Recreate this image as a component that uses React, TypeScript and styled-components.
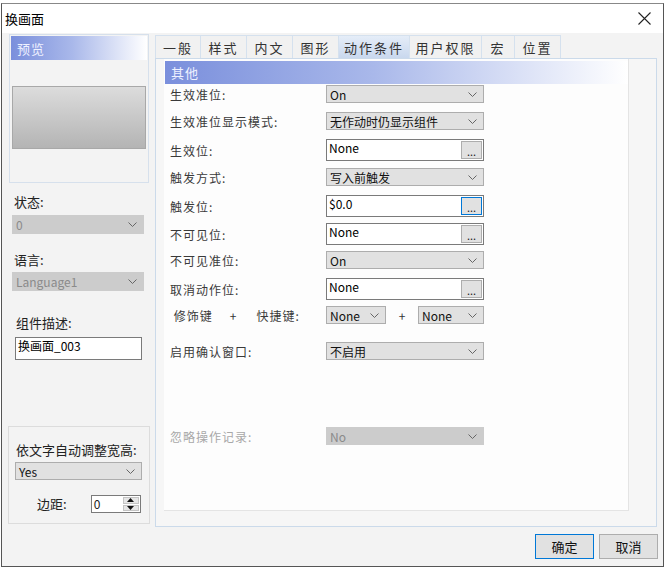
import React from 'react'
import styled, { createGlobalStyle } from 'styled-components'

const GlobalStyle = createGlobalStyle`
  html, body { margin: 0; padding: 0; background: #ffffff; }
  body { font-family: "Noto Sans CJK SC", "Liberation Sans", sans-serif; font-size: 12px; color: #222; }
`

const Window = styled.div`
  margin: 3px 0 0 1px;
  width: 663px;
  height: 564px;
  box-sizing: border-box;
  border: 1px solid #555;
  border-top-color: #888;
  display: flex;
  flex-direction: column;
  background: #f3f3f3;
`

const TitleBar = styled.div`
  height: 29px;
  background: #fff;
  display: flex;
  align-items: center;
  justify-content: space-between;
  padding: 0 12px 0 3px;
  font-size: 13px;
  color: #000;
`

const Body = styled.div`
  flex: 1;
  display: flex;
  flex-direction: column;
  padding: 1px 5px 0 6px;
`

const Content = styled.div`
  display: flex;
  gap: 5px;
`

const LeftCol = styled.div`
  width: 142px;
  display: flex;
  flex-direction: column;
`

const PreviewGroup = styled.div`
  margin-left: 1px;
  width: 140px;
  height: 149px;
  box-sizing: border-box;
  border: 1px solid #d6e0ec;
  padding: 1px;
  display: flex;
  flex-direction: column;
`

const GradientHeader = styled.div<{ $h: number }>`
  height: ${p => p.$h}px;
  flex-shrink: 0;
  display: flex;
  align-items: center;
  padding-left: 6px;
  color: #eef1ff;
  font-size: 13px;
  letter-spacing: 1px;
  background: linear-gradient(to right, #7a8fdc 0%, #a9b8ea 45%, #ffffff 100%);
`

const PreviewBox = styled.div`
  margin: 26px 1px 0 1px;
  height: 63px;
  box-sizing: border-box;
  border: 1px solid #a8a8a8;
  background: linear-gradient(to bottom, #dcdcdc, #b4b4b4);
`

const SideLabel = styled.div<{ $top: number; $left?: number }>`
  margin-top: ${p => p.$top}px;
  margin-left: ${p => p.$left ?? 6}px;
  height: 14px;
  line-height: 14px;
  font-size: 13px;
  color: #222;
`

const Combo = styled.div<{ $w: number; $h?: number; $disabled?: boolean; $top?: number; $left?: number }>`
  width: ${p => p.$w}px;
  height: ${p => p.$h ?? 18}px;
  margin-top: ${p => p.$top ?? 0}px;
  margin-left: ${p => p.$left ?? 0}px;
  box-sizing: border-box;
  flex-shrink: 0;
  border: 1px solid ${p => (p.$disabled ? '#cccccc' : '#adadad')};
  background: ${p => (p.$disabled ? '#cccccc' : '#e1e1e1')};
  color: ${p => (p.$disabled ? '#8a8a8a' : '#111')};
  display: flex;
  align-items: center;
  justify-content: space-between;
  padding: 0 6px 0 3px;
  font-size: 12px;
  font-family: "Noto Sans CJK SC", "Liberation Sans", sans-serif;
  svg { flex-shrink: 0; }
`

const TextBox = styled.div<{ $w: number; $h: number; $top?: number; $left?: number }>`
  width: ${p => p.$w}px;
  height: ${p => p.$h}px;
  margin-top: ${p => p.$top ?? 0}px;
  margin-left: ${p => p.$left ?? 0}px;
  box-sizing: border-box;
  flex-shrink: 0;
  border: 1px solid #7a7a7a;
  background: #fff;
  display: flex;
  align-items: flex-start;
  justify-content: space-between;
  padding: 1px 1px 1px 2px;
  font-size: 12px;
  line-height: 14px;
  color: #000;
`

const DotsButton = styled.div<{ $focus?: boolean }>`
  align-self: flex-end;
  width: 21px;
  height: 18px;
  box-sizing: border-box;
  border: 1px solid ${p => (p.$focus ? '#0078d7' : '#adadad')};
  background: #e1e1e1;
  display: flex;
  align-items: flex-end;
  justify-content: center;
  font-size: 11px;
  line-height: 12px;
  padding-bottom: 1px;
  color: #222;
`

const AutoGroup = styled.div`
  margin-top: 66px;
  width: 142px;
  height: 98px;
  box-sizing: border-box;
  border: 1px solid #dcdcdc;
  display: flex;
  flex-direction: column;
`

const SpinRow = styled.div`
  margin-top: 15px;
  display: flex;
  align-items: center;
`

const Spin = styled.div`
  margin-left: 24px;
  width: 50px;
  height: 18px;
  box-sizing: border-box;
  border: 1px solid #7a7a7a;
  background: #fff;
  display: flex;
  justify-content: space-between;
  font-size: 12px;
  line-height: 15px;
  padding-left: 2px;
`

const SpinButtons = styled.div`
  width: 18px;
  display: flex;
  flex-direction: column;
  gap: 1px;
  padding: 1px;
  box-sizing: border-box;
`

const SpinArrow = styled.div`
  flex: 1;
  background: #e6e6e6;
  border: 1px solid #c4c4c4;
  display: flex;
  align-items: center;
  justify-content: center;
`

const RightCol = styled.div`
  width: 502px;
  display: flex;
  flex-direction: column;
  margin-top: 1px;
`

const TabStrip = styled.div`
  display: flex;
  height: 23px;
  position: relative;
  z-index: 1;
`

const Tab = styled.div<{ $w: number; $active?: boolean }>`
  width: ${p => p.$w}px;
  box-sizing: border-box;
  border: 1px solid #d5e1ee;
  border-bottom: none;
  margin-right: -1px;
  background: ${p => (p.$active ? 'linear-gradient(to bottom, #e5edf8, #c9d8ee)' : '#f1f1f1')};
  display: flex;
  align-items: center;
  justify-content: center;
  font-size: 13px;
  letter-spacing: 2px;
  color: #333;
`

const TabPanel = styled.div`
  height: 469px;
  box-sizing: border-box;
  border: 1px solid #cbdaea;
  background: #f6f6f6;
  padding: 0 27px 15px 8px;
  display: flex;
`

const Sheet = styled.div`
  flex: 1;
  background: #fdfdfd;
  border-right: 1px solid #e4e4e4;
  border-bottom: 1px solid #e4e4e4;
  padding: 2px 0 0 1px;
  display: flex;
  flex-direction: column;
`

const Row = styled.div<{ $top: number }>`
  margin-top: ${p => p.$top}px;
  display: flex;
  align-items: center;
  padding-left: 5px;
`

const FieldLabel = styled.div<{ $disabled?: boolean; $w?: number }>`
  width: ${p => p.$w ?? 156}px;
  flex-shrink: 0;
  font-size: 12px;
  letter-spacing: 1px;
  color: ${p => (p.$disabled ? '#a8a8a8' : '#3a3a3a')};
`

const Plus = styled.span<{ $w: number }>`
  width: ${p => p.$w}px;
  flex-shrink: 0;
  text-align: center;
  font-size: 12px;
  color: #333;
`

const Footer = styled.div`
  flex: 1;
  display: flex;
  justify-content: flex-end;
  align-items: flex-start;
  gap: 5px;
  padding-top: 7px;
`

const DialogButton = styled.div<{ $primary?: boolean }>`
  width: 59px;
  height: 25px;
  box-sizing: border-box;
  border: 1px solid ${p => (p.$primary ? '#0078d7' : '#adadad')};
  background: #e1e1e1;
  display: flex;
  align-items: center;
  justify-content: center;
  font-size: 13px;
  color: #111;
`

const Chevron = () => (
  <svg width="9" height="5" viewBox="0 0 9 5">
    <path d="M0.5 0.5 L4.5 4.5 L8.5 0.5" fill="none" stroke="#666" strokeWidth="1" />
  </svg>
)

const CloseIcon = () => (
  <svg width="13" height="13" viewBox="0 0 13 13">
    <path d="M0.5 0.5 L12.5 12.5 M12.5 0.5 L0.5 12.5" stroke="#222" strokeWidth="1.1" />
  </svg>
)

const Arrow = ({ up }: { up?: boolean }) => (
  <svg width="7" height="4" viewBox="0 0 7 4">
    <path d={up ? 'M0 4 L3.5 0 L7 4 Z' : 'M0 0 L3.5 4 L7 0 Z'} fill="#111" />
  </svg>
)

const tabs = [
  { name: '一般', w: 46 },
  { name: '样式', w: 47 },
  { name: '内文', w: 47 },
  { name: '图形', w: 47 },
  { name: '动作条件', w: 72, active: true },
  { name: '用户权限', w: 73 },
  { name: '宏', w: 34 },
  { name: '位置', w: 47 },
]

const SelectField = ({ value, w = 158, disabled }: { value: string; w?: number; disabled?: boolean }) => (
  <Combo $w={w} $disabled={disabled}>
    <span>{value}</span>
    <Chevron />
  </Combo>
)

const BitField = ({ value, focus }: { value: string; focus?: boolean }) => (
  <TextBox $w={158} $h={22}>
    <span>{value}</span>
    <DotsButton $focus={focus}>...</DotsButton>
  </TextBox>
)

const App: React.FC = () => {
  return (
    <>
      <GlobalStyle />
      <Window>
        <TitleBar>
          <span>换画面</span>
          <CloseIcon />
        </TitleBar>
        <Body>
          <Content>
            <LeftCol>
              <PreviewGroup>
                <GradientHeader $h={24}>预览</GradientHeader>
                <PreviewBox />
              </PreviewGroup>
              <SideLabel $top={12}>状态:</SideLabel>
              <Combo $w={132} $h={19} $top={6} $left={4} $disabled>
                <span>0</span>
                <Chevron />
              </Combo>
              <SideLabel $top={19}>语言:</SideLabel>
              <Combo $w={132} $h={19} $top={5} $left={4} $disabled>
                <span>Language1</span>
                <Chevron />
              </Combo>
              <SideLabel $top={25} $left={8}>组件描述:</SideLabel>
              <TextBox $w={127} $h={23} $top={7} $left={7}>
                <span>换画面_003</span>
              </TextBox>
              <AutoGroup>
                <SideLabel $top={16} $left={7}>依文字自动调整宽高:</SideLabel>
                <Combo $w={127} $top={5} $left={6}>
                  <span>Yes</span>
                  <Chevron />
                </Combo>
                <SpinRow>
                  <SideLabel $top={0} $left={28}>边距:</SideLabel>
                  <Spin>
                    <span>0</span>
                    <SpinButtons>
                      <SpinArrow><Arrow up /></SpinArrow>
                      <SpinArrow><Arrow /></SpinArrow>
                    </SpinButtons>
                  </Spin>
                </SpinRow>
              </AutoGroup>
            </LeftCol>
            <RightCol>
              <TabStrip>
                {tabs.map(t => (
                  <Tab key={t.name} $w={t.w} $active={t.active}>{t.name}</Tab>
                ))}
              </TabStrip>
              <TabPanel>
                <Sheet>
                  <GradientHeader $h={23}>其他</GradientHeader>
                  <Row $top={1}>
                    <FieldLabel>生效准位:</FieldLabel>
                    <SelectField value="On" />
                  </Row>
                  <Row $top={9}>
                    <FieldLabel>生效准位显示模式:</FieldLabel>
                    <SelectField value="无作动时仍显示组件" />
                  </Row>
                  <Row $top={9}>
                    <FieldLabel>生效位:</FieldLabel>
                    <BitField value="None" />
                  </Row>
                  <Row $top={7}>
                    <FieldLabel>触发方式:</FieldLabel>
                    <SelectField value="写入前触发" />
                  </Row>
                  <Row $top={9}>
                    <FieldLabel>触发位:</FieldLabel>
                    <BitField value="$0.0" focus />
                  </Row>
                  <Row $top={6}>
                    <FieldLabel>不可见位:</FieldLabel>
                    <BitField value="None" />
                  </Row>
                  <Row $top={6}>
                    <FieldLabel>不可见准位:</FieldLabel>
                    <SelectField value="On" />
                  </Row>
                  <Row $top={9}>
                    <FieldLabel>取消动作位:</FieldLabel>
                    <BitField value="None" />
                  </Row>
                  <Row $top={6}>
                    <FieldLabel $w={58}>&nbsp;修饰键</FieldLabel>
                    <Plus $w={10}>+</Plus>
                    <FieldLabel $w={88}>&nbsp;&nbsp;&nbsp;&nbsp;&nbsp;快捷键:</FieldLabel>
                    <SelectField value="None" w={60} />
                    <Plus $w={32}>+</Plus>
                    <SelectField value="None" w={66} />
                  </Row>
                  <Row $top={18}>
                    <FieldLabel>启用确认窗口:</FieldLabel>
                    <SelectField value="不启用" />
                  </Row>
                  <Row $top={67}>
                    <FieldLabel $disabled>忽略操作记录:</FieldLabel>
                    <SelectField value="No" disabled />
                  </Row>
                </Sheet>
              </TabPanel>
            </RightCol>
          </Content>
          <Footer>
            <DialogButton $primary>确定</DialogButton>
            <DialogButton>取消</DialogButton>
          </Footer>
        </Body>
      </Window>
    </>
  )
}

export default App
